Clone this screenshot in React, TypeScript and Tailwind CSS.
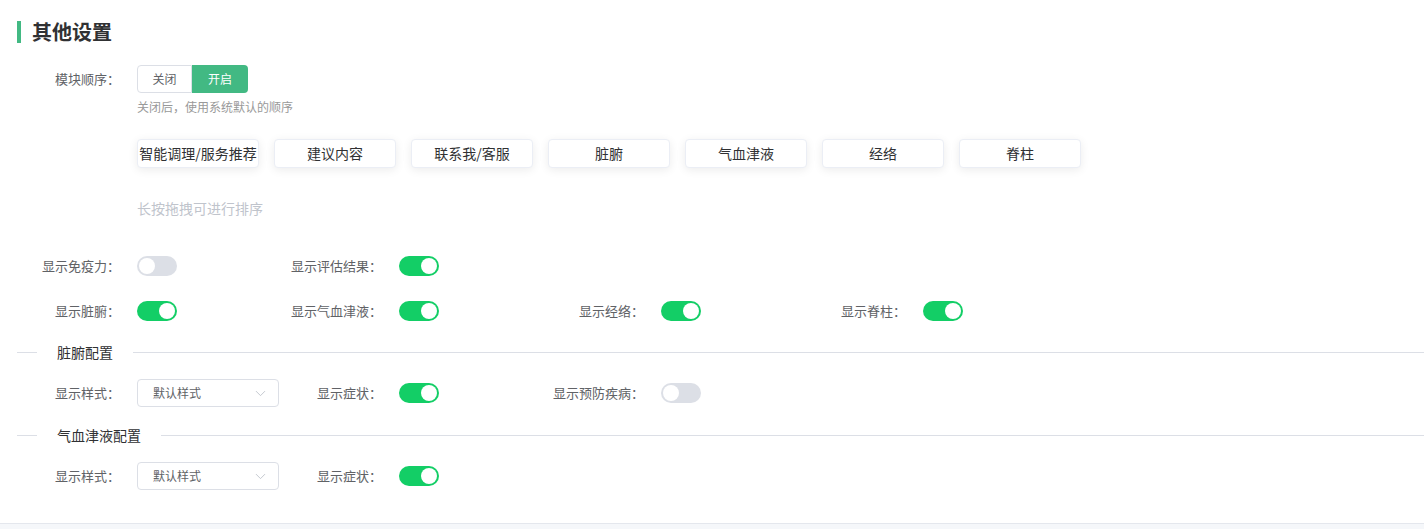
import { ChevronDown } from 'lucide-react';

const SORT_ITEMS = ['智能调理/服务推荐', '建议内容', '联系我/客服', '脏腑', '气血津液', '经络', '脊柱'];

function Toggle({ on }: { on: boolean }) {
  return (
    <div
      className={
        on
          ? 'w-[40px] h-[20px] rounded-full bg-[#13ce66] flex items-center justify-end px-[2px]'
          : 'w-[40px] h-[20px] rounded-full bg-[#dcdfe6] flex items-center justify-start px-[2px]'
      }
    >
      <div className="w-[16px] h-[16px] rounded-full bg-white" />
    </div>
  );
}

function Field({ label, children }: { label: string; children: React.ReactNode }) {
  return (
    <div className="w-[262px] flex items-center shrink-0">
      <div className="w-[120px] shrink-0 text-right text-[13px] leading-[20px] text-[#606266]">{label}</div>
      <div className="ml-[17px] shrink-0 flex items-center">{children}</div>
    </div>
  );
}

function StyleSelect() {
  return (
    <div className="w-[142px] h-[28px] border border-[#dcdfe6] rounded-[4px] flex items-center justify-between pl-[15px] pr-[9px] bg-white">
      <span className="text-[12px] text-[#606266] leading-[16px]">默认样式</span>
      <ChevronDown size={17} strokeWidth={1.3} className="text-[#c0c4cc]" />
    </div>
  );
}

function Divider({ title }: { title: string }) {
  return (
    <div className="flex items-center h-[20px]">
      <div className="ml-[17px] w-[20px] h-px bg-[#dcdfe6]" />
      <span className="px-[20px] text-[14px] leading-[20px] text-[#303133]">{title}</span>
      <div className="flex-1 h-px bg-[#dcdfe6]" />
    </div>
  );
}

export default function App() {
  return (
    <div className="min-h-screen bg-[#f5f7fa] font-['Noto_Sans_CJK_SC','Microsoft_YaHei',sans-serif]">
      <div className="bg-white h-[524px] border-b border-[#e4e7ed] pt-[21px]">
        <div className="flex items-center h-[22px] ml-[17px]">
          <div className="w-[4px] h-[22px] bg-[#42b983]" />
          <h2 className="ml-[11px] text-[20px] font-bold leading-[22px] text-[#303133]">其他设置</h2>
        </div>

        <div className="mt-[22px] flex items-center h-[28px]">
          <div className="w-[120px] text-right text-[13px] leading-[20px] text-[#606266]">模块顺序：</div>
          <div className="ml-[17px] flex">
            <div className="w-[55px] h-[28px] border border-[#dcdfe6] rounded-l-[4px] flex items-center justify-center text-[12px] text-[#606266]">
              关闭
            </div>
            <div className="w-[56px] h-[28px] bg-[#42b983] rounded-r-[4px] flex items-center justify-center text-[12px] text-white">
              开启
            </div>
          </div>
        </div>
        <div className="ml-[137px] mt-[6px] text-[12px] leading-[16px] text-[#999999]">关闭后，使用系统默认的顺序</div>

        <div className="ml-[137px] mt-[24px] flex gap-[15px]">
          {SORT_ITEMS.map((item) => (
            <div
              key={item}
              className="w-[122px] h-[29px] rounded-[4px] border border-[#ebeef5] bg-white shadow-[0_2px_10px_0_rgba(0,0,0,0.08)] flex items-center justify-center text-[14px] text-[#303133] whitespace-nowrap"
            >
              {item}
            </div>
          ))}
        </div>
        <div className="ml-[137px] mt-[30px] text-[14px] leading-[20px] text-[#c0c4cc]">长按拖拽可进行排序</div>

        <div className="mt-[38px] flex">
          <Field label="显示免疫力："><Toggle on={false} /></Field>
          <Field label="显示评估结果："><Toggle on /></Field>
        </div>
        <div className="mt-[25px] flex">
          <Field label="显示脏腑："><Toggle on /></Field>
          <Field label="显示气血津液："><Toggle on /></Field>
          <Field label="显示经络："><Toggle on /></Field>
          <Field label="显示脊柱："><Toggle on /></Field>
        </div>

        <div className="mt-[21px]">
          <Divider title="脏腑配置" />
        </div>
        <div className="mt-[17px] flex">
          <Field label="显示样式："><StyleSelect /></Field>
          <Field label="显示症状："><Toggle on /></Field>
          <Field label="显示预防疾病："><Toggle on={false} /></Field>
        </div>

        <div className="mt-[18px]">
          <Divider title="气血津液配置" />
        </div>
        <div className="mt-[17px] flex">
          <Field label="显示样式："><StyleSelect /></Field>
          <Field label="显示症状："><Toggle on /></Field>
        </div>
      </div>
    </div>
  );
}
